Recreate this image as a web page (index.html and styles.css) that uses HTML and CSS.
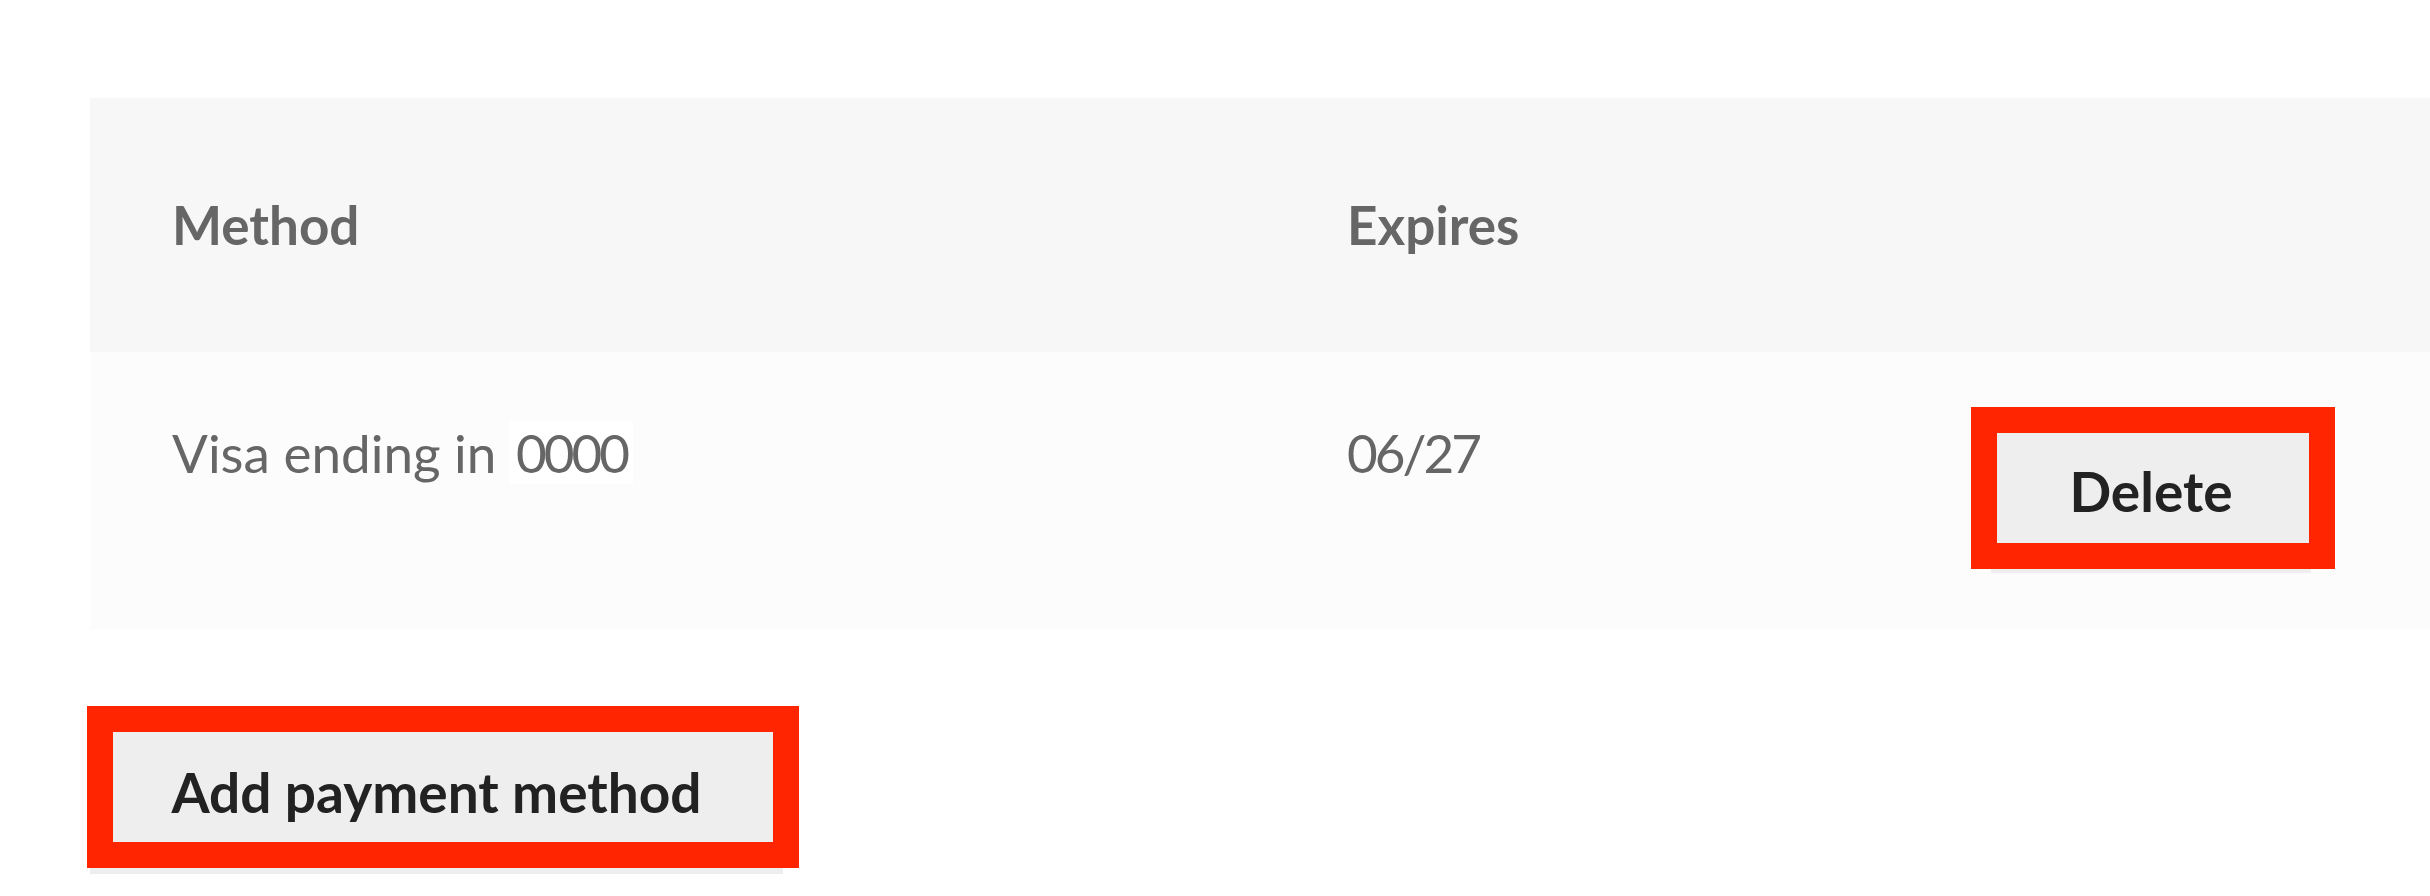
FILE: index.html
```html
<!DOCTYPE html>
<html lang="en">
<head>
    <meta charset="UTF-8">
    <meta name="viewport" content="width=device-width, initial-scale=1.0">
    <title>Payment methods</title>
    <link rel="stylesheet" href="styles.css">
</head>
<body>
    <div class="container">
        <table class="methods">
            <thead>
                <tr>
                    <th class="col-method">Method</th>
                    <th class="col-expires">Expires</th>
                    <th class="col-actions"></th>
                </tr>
            </thead>
            <tbody>
                <tr>
                    <td>Visa ending in <span class="last4">0000</span></td>
                    <td class="num">06/27</td>
                    <td class="actions">
                        <button class="btn btn-delete marked">Delete</button>
                    </td>
                </tr>
            </tbody>
        </table>
        <button class="btn btn-add marked">Add payment method</button>
    </div>
</body>
</html>
```

FILE: styles.css
```css
body {
    font-family: Lato, "Open Sans", sans-serif;
    margin: 0;
    padding: 0;
    background: #fff;
    color: #666;
}
.container {
    padding: 98px 0 0 90px;
}
.methods {
    width: 2340px;
    border-collapse: collapse;
    table-layout: fixed;
    font-size: 53px;
    line-height: 1.2;
}
th, td {
    box-sizing: border-box;
    text-align: left;
    padding: 0 82px;
}
.col-method {
    width: 1175px;
}
.col-expires {
    width: 644px;
}
thead tr {
    height: 254px;
    background: #f7f7f7;
}
th {
    font-weight: bold;
    color: #666;
    vertical-align: middle;
}
tbody tr {
    height: 278px;
    background: #fcfcfc;
}
td {
    vertical-align: top;
    padding-top: 69px;
}
td.num {
    letter-spacing: -3px;
}
td.actions {
    vertical-align: middle;
    padding-top: 0;
}
.last4 {
    background: #fff;
    padding: 0 6px;
    letter-spacing: -3px;
}
.btn {
    font-family: Lato, "Open Sans", sans-serif;
    font-size: 55px;
    font-weight: bold;
    line-height: 1.2;
    color: #222;
    background: #eee;
    border: none;
    border-radius: 0;
    padding: 49px 0;
    position: relative;
}
.btn-delete {
    width: 320px;
}
.btn-add {
    display: block;
    width: 693px;
    margin-top: 80px;
}
/* red highlight boxes drawn over the buttons */
.marked::after {
    content: '';
    position: absolute;
    border: 26px solid #ff2500;
    box-sizing: border-box;
    height: 162px;
}
.btn-delete::after {
    left: -20px;
    top: -2px;
    width: 364px;
}
.btn-add::after {
    left: -3px;
    top: -4px;
    width: 712px;
}
```
